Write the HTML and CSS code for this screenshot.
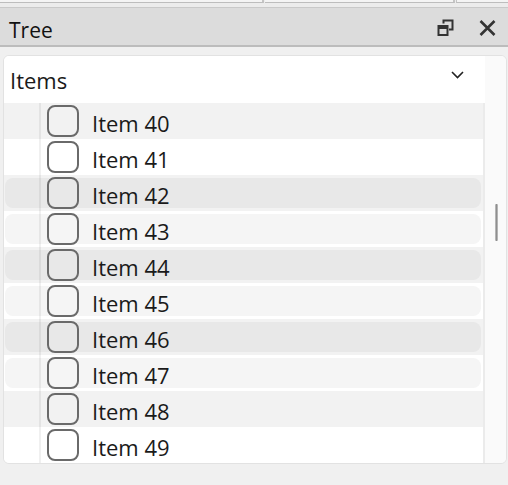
FILE: index.html
```html
<!DOCTYPE html>
<html>
<head>
<meta charset="utf-8">
<link rel="stylesheet" href="styles.css">
</head>
<body>
<div class="tabs"><div class="tab t1"></div><div class="tab t2"></div><div class="tab t3"></div></div>
<div class="titlebar">
  <span class="title">Tree</span>
  <div class="tools">
    <svg class="ico-restore" width="17" height="17" viewBox="0 0 17 17"><path d="M6.5 4.5V1.5H15.5V10.5H12" fill="none" stroke="#333" stroke-width="2"/><path fill="#333" fill-rule="evenodd" d="M0.5 6H11.5V17H0.5Z M2.5 10V15H9.5V10Z"/></svg>
    <svg class="ico-close" width="17" height="16" viewBox="0 0 17 16"><path d="M1.5 1L15.5 15M15.5 1L1.5 15" stroke="#333" stroke-width="2.6" fill="none"/></svg>
  </div>
</div>
<div class="card">
  <div class="main">
    <div class="head">
      <span class="head-label">Items</span>
      <svg class="chev" width="13" height="8" viewBox="0 0 13 8"><path d="M1 1L6.5 6.5L12 1" fill="none" stroke="#222" stroke-width="1.6"/></svg>
    </div>
    <div class="list">
      <div class="row even"><div class="cell"><span class="box"></span><span class="label">Item 40</span></div></div>
      <div class="row odd"><div class="cell"><span class="box"></span><span class="label">Item 41</span></div></div>
      <div class="row even"><div class="cell pill-a"><span class="box"></span><span class="label">Item 42</span></div></div>
      <div class="row odd"><div class="cell pill-b"><span class="box"></span><span class="label">Item 43</span></div></div>
      <div class="row even"><div class="cell pill-a"><span class="box"></span><span class="label">Item 44</span></div></div>
      <div class="row odd"><div class="cell pill-b"><span class="box"></span><span class="label">Item 45</span></div></div>
      <div class="row even"><div class="cell pill-a"><span class="box"></span><span class="label">Item 46</span></div></div>
      <div class="row odd"><div class="cell pill-b"><span class="box"></span><span class="label">Item 47</span></div></div>
      <div class="row even"><div class="cell"><span class="box"></span><span class="label">Item 48</span></div></div>
      <div class="row odd"><div class="cell"><span class="box"></span><span class="label">Item 49</span></div></div>
    </div>
  </div>
  <div class="scroll"><div class="thumb"></div></div>
</div>
</body>
</html>
```
FILE: styles.css
```css
html, body {
  margin: 0;
  padding: 0;
}
body {
  background: #f0f0f0;
  font-family: "Open Sans", "Noto Sans", sans-serif;
  color: #1a1a1a;
  width: 508px;
  height: 485px;
  overflow: hidden;
}
.tabs {
  display: flex;
  height: 7px;
  background: #ececec;
  border-bottom: 1px solid #c9c9c9;
}
.tab {
  height: 2px;
  background: #f4f4f4;
  border-bottom: 1px solid #bdbdbd;
}
.t1 { width: 262px; border-right: 2px solid #c4c4c4; }
.t2 { width: 188px; border-right: 2px solid #c4c4c4; margin-left: 1px; }
.t3 { flex: 1; margin-left: 1px; border-left: 1px solid #c4c4c4; }
.titlebar {
  height: 37px;
  background: #dcdcdc;
  border-bottom: 2px solid #bcbcbc;
  display: flex;
  align-items: center;
  padding-left: 9px;
  padding-right: 12px;
}
.title {
  font-size: 21px;
  line-height: 28px;
  margin-top: 7px;
  color: #111;
}
.tools {
  margin-left: auto;
  display: flex;
  align-items: center;
  gap: 25px;
}
.ico-restore { display: block; margin-top: 1px; }
.ico-close { display: block; margin-top: 2px; }
.card {
  margin: 8px 1px 0 3px;
  height: 407px;
  border: 1px solid #e2e2e2;
  border-radius: 6px;
  background: #fafafa;
  display: flex;
  overflow: hidden;
}
.main {
  width: 481px;
  display: flex;
  flex-direction: column;
}
.head {
  height: 47px;
  background: #ffffff;
  display: flex;
  align-items: center;
  padding-left: 6px;
  padding-right: 21px;
}
.head-label {
  font-size: 22px;
  line-height: 30px;
}
.chev {
  margin-left: auto;
  display: block;
  margin-top: -9px;
}
.list {
  position: relative;
  border-right: 2px solid #ebebeb;
}
.list::before {
  content: "";
  position: absolute;
  left: 35px;
  top: 0;
  bottom: 0;
  width: 2px;
  background: rgba(0, 0, 0, 0.06);
  z-index: 1;
}
.row {
  height: 36px;
  display: flex;
  align-items: center;
}
.even { background: #f2f2f2; }
.odd { background: #ffffff; }
.cell {
  flex: 1;
  height: 30px;
  margin: 0 2px 0 1px;
  display: flex;
  align-items: center;
  padding-left: 42px;
  border-radius: 8px;
}
.pill-a { background: #e8e8e8; }
.pill-b { background: #f5f5f5; }
.box {
  width: 28px;
  height: 28px;
  border: 2px solid #6a6a6a;
  border-radius: 8px;
  flex: none;
  position: relative;
  z-index: 2;
}
.label {
  font-size: 22px;
  line-height: 30px;
  margin-left: 13px;
  margin-top: 3px;
}
.scroll {
  flex: 1;
  background: #fafafa;
}
.thumb {
  width: 3px;
  height: 37px;
  margin: 148px 0 0 10px;
  background: linear-gradient(to right, #c8c8c8, #8f8f8f 50%, #c8c8c8);
  border-radius: 1px;
}
```
